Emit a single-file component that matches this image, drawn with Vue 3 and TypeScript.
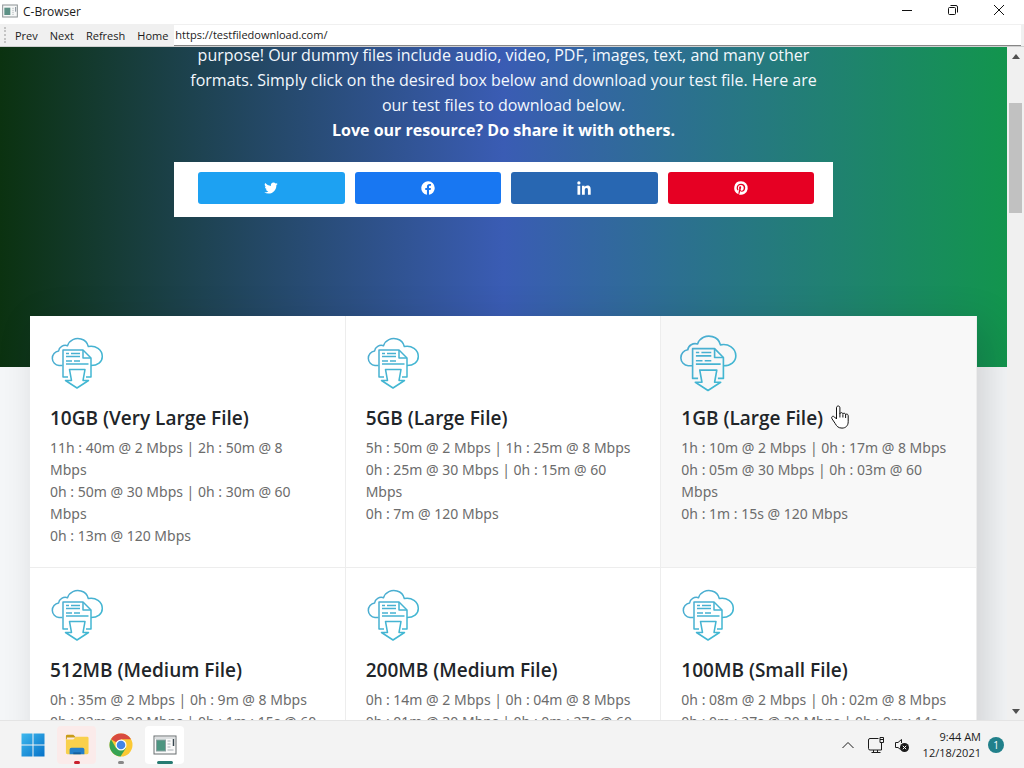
<script setup lang="ts">
import { ref } from 'vue'

interface FileCard {
  title: string
  lines: string[]
  active?: boolean
}

const address = ref('https://testfiledownload.com/')
const actions = ['Prev', 'Next', 'Refresh', 'Home']

const networks = [
  { name: 'Twitter', key: 'twitter', path: 'M28 8.6a9.9 9.9 0 0 1-2.8.8 4.9 4.9 0 0 0 2.1-2.7c-.9.5-2 1-3.1 1.2a4.9 4.9 0 0 0-8.4 4.5A14 14 0 0 1 5.7 7.2a4.9 4.9 0 0 0 1.5 6.6c-.8 0-1.6-.2-2.2-.6v.1a4.9 4.9 0 0 0 3.9 4.8c-.7.2-1.5.2-2.2.1a4.9 4.9 0 0 0 4.6 3.4A9.9 9.9 0 0 1 4 23.600a14 14 0 0 0 7.5 2.2c9.1 0 14-7.5 14-14v-.6A10 10 0 0 0 28 8.6z' },
  { name: 'Facebook', key: 'facebook', path: 'M28 16A12 12 0 1 0 14.1 27.9v-8.4h-3V16h3v-2.6c0-3 1.8-4.7 4.5-4.7 1.3 0 2.7.2 2.7.2v3h-1.5c-1.5 0-2 .9-2 1.9V16h3.4l-.5 3.5h-2.9v8.4A12 12 0 0 0 28 16z' },
  { name: 'LinkedIn', key: 'linkedin', path: 'M4.4 12h4.9v16H4.4zM6.9 4a2.9 2.9 0 1 1 0 5.8 2.9 2.9 0 0 1 0-5.8zM12.4 12h4.7v2.2h.1c.7-1.3 2.3-2.6 4.7-2.6 5 0 6 3.3 6 7.6V28H23v-7.8c0-1.9 0-4.3-2.6-4.3s-3 2-3 4.1v8h-5z' },
  { name: 'Pinterest', key: 'pinterest', path: 'M16 4a12 12 0 0 0-4.4 23.2c-.1-.9-.2-2.4 0-3.4l1.4-6s-.4-.7-.4-1.8c0-1.7 1-2.9 2.2-2.9 1 0 1.5.8 1.5 1.7 0 1-.7 2.6-1 4-.3 1.2.6 2.2 1.8 2.2 2.1 0 3.8-2.2 3.8-5.5 0-2.9-2.1-4.9-5-4.9a5.2 5.2 0 0 0-5.4 5.2c0 1 .4 2.1.9 2.7v.3l-.3 1.4c-.1.2-.2.3-.4.2-1.5-.7-2.4-2.9-2.4-4.6 0-3.8 2.7-7.3 7.9-7.3 4.1 0 7.3 3 7.3 6.9 0 4.1-2.6 7.4-6.2 7.4-1.2 0-2.3-.6-2.7-1.4l-.8 2.9c-.3 1-1 2.3-1.5 3.1A12 12 0 1 0 16 4z' },
]

const files: FileCard[] = [
  {
    title: '10GB (Very Large File)',
    lines: ['11h : 40m @ 2 Mbps | 2h : 50m @ 8', 'Mbps', '0h : 50m @ 30 Mbps | 0h : 30m @ 60', 'Mbps', '0h : 13m @ 120 Mbps'],
  },
  {
    title: '5GB (Large File)',
    lines: ['5h : 50m @ 2 Mbps | 1h : 25m @ 8 Mbps', '0h : 25m @ 30 Mbps | 0h : 15m @ 60', 'Mbps', '0h : 7m @ 120 Mbps'],
  },
  {
    title: '1GB (Large File)',
    lines: ['1h : 10m @ 2 Mbps | 0h : 17m @ 8 Mbps', '0h : 05m @ 30 Mbps | 0h : 03m @ 60', 'Mbps', '0h : 1m : 15s @ 120 Mbps'],
    active: true,
  },
  {
    title: '512MB (Medium File)',
    lines: ['0h : 35m @ 2 Mbps | 0h : 9m @ 8 Mbps', '0h : 02m @ 30 Mbps | 0h : 1m : 15s @ 60'],
  },
  {
    title: '200MB (Medium File)',
    lines: ['0h : 14m @ 2 Mbps | 0h : 04m @ 8 Mbps', '0h : 01m @ 30 Mbps | 0h : 0m : 27s @ 60'],
  },
  {
    title: '100MB (Small File)',
    lines: ['0h : 08m @ 2 Mbps | 0h : 02m @ 8 Mbps', '0h : 0m : 27s @ 30 Mbps | 0h : 0m : 14s'],
  },
]
</script>

<template>
  <div class="desktop">
    <header class="titlebar">
      <svg class="app-icon" viewBox="0 0 24 20" aria-hidden="true">
        <rect x="1" y="1" width="22" height="18" fill="#f7f8f8" stroke="#8b9294" stroke-width="1.5" />
        <rect x="3.5" y="5" width="9" height="11" fill="#5d9186" />
        <path d="M15 6h3M15 9h3M15 12h3M15 15h3" stroke="#b3bbbd" />
        <path d="M20.5 4v7" stroke="#7f8b96" stroke-width="1.5" />
      </svg>
      <span class="app-name">C-Browser</span>
      <div class="window-buttons">
        <button type="button" aria-label="Minimize"><svg viewBox="0 0 12 12"><path d="M1 6.5h10" /></svg></button>
        <button type="button" aria-label="Restore"><svg viewBox="0 0 12 12"><rect x="1.5" y="3.5" width="7" height="7" rx="1" /><path d="M3.5 1.5H9a1.5 1.5 0 0 1 1.5 1.5v5.5" /></svg></button>
        <button type="button" aria-label="Close"><svg viewBox="0 0 12 12"><path d="M1 1l10 10M11 1L1 11" /></svg></button>
      </div>
    </header>

    <nav class="toolbar">
      <span class="grip"></span>
      <button v-for="a in actions" :key="a" type="button" class="tool">{{ a }}</button>
      <input v-model="address" class="address" type="text" aria-label="Address" />
    </nav>

    <div class="viewport">
      <main class="page">
        <section class="hero">
          <p class="intro">
            purpose! Our dummy files include audio, video, PDF, images, text, and many other<br />
            formats. Simply click on the desired box below and download your test file. Here are<br />
            our test files to download below.<br />
            <strong>Love our resource? Do share it with others.</strong>
          </p>
          <div class="share">
            <a v-for="n in networks" :key="n.key" href="#" class="share-link" :class="n.key" :aria-label="n.name">
              <svg viewBox="0 0 32 32"><path :d="n.path" /></svg>
            </a>
          </div>
        </section>

        <section class="files">
          <a v-for="f in files" :key="f.title" href="#" class="file" :class="{ active: f.active }">
            <svg class="cloud" viewBox="0 0 54 54" aria-hidden="true">
              <defs>
                <linearGradient id="cloudStroke" x1="0" y1="0" x2="54" y2="54" gradientUnits="userSpaceOnUse">
                  <stop offset="0" stop-color="#4fa9d0" />
                  <stop offset="1" stop-color="#3dbcd3" />
                </linearGradient>
              </defs>
              <g fill="none" stroke="url(#cloudStroke)" stroke-width="1.5" stroke-linejoin="round">
                <path d="M12.500 29.500H9A7.300 7.300 0 0 1 8.600 15C9 10.800 13.500 8.500 17.500 9.700C19.500 4 25.500 1.500 31 3C35 4 37.500 7 38.300 10.500C45.500 9 52.300 13.500 52.300 20.500C52.300 26 47.500 29.500 41 29.500" />
                <path d="M18 41H13V14H33L41 22V41H36" />
                <path d="M33 14V22H41" />
                <path d="M16 17.500h3M21 17.500h9M16 20.500h14M16 25h6M24 25h6M16 28h22.500" />
                <path d="M19.500 33.500h15.500l-2 11h5.500L27 52L15.500 44.500h6z" />
              </g>
            </svg>
            <h2 class="file-title">
              <span class="title-text">{{ f.title }}
                <svg v-if="f.active" class="pointer" viewBox="0 0 18 24" aria-hidden="true">
                  <path d="M5.500 14V2.800c0-2.400 3.400-2.400 3.400 0V9c.2-2 3-1.800 3 .2.300-1.500 2.700-1.300 2.700.6.400-1.200 2.600-.9 2.600.9v6c0 4-2.500 6.400-6.200 6.400-3.500 0-5.300-1.700-6.800-4.600L1 13.800c-1.200-2.200 1.200-3.300 2.500-1.800z" fill="#fff" stroke="#111" />
                  <path d="M8.900 9v3.500M11.900 9.500v3M14.600 10v3" fill="none" stroke="#111" />
                </svg>
              </span>
            </h2>
            <p class="speeds">
              <template v-for="(l, i) in f.lines" :key="i">{{ l }}<br /></template>
            </p>
          </a>
        </section>
      </main>

      <div class="scrollbar" aria-hidden="true">
        <svg viewBox="0 0 8 5"><path d="M0 5L4 0l4 5z" /></svg>
        <div class="track"><div class="thumb"></div></div>
        <svg viewBox="0 0 8 5"><path d="M0 0l4 5 4-5z" /></svg>
      </div>
    </div>

    <footer class="taskbar">
      <button type="button" class="task" aria-label="Start">
        <svg viewBox="0 0 24 24">
          <defs><linearGradient id="win" x1="0" y1="0" x2="1" y2="1"><stop offset="0" stop-color="#3fb9ee" /><stop offset="1" stop-color="#0672c8" /></linearGradient></defs>
          <path fill="url(#win)" d="M.5.5h11v11H.5zM12.500.5h11v11h-11zM.5 12.500h11v11H.5zM12.500 12.500h11v11h-11z" />
        </svg>
      </button>
      <button type="button" class="task alert" aria-label="File Explorer">
        <svg viewBox="0 0 26 24">
          <path d="M1 2.500Q1 1 2.500 1H9l3 3H2v2H1z" fill="#c99b17" />
          <path d="M1 6h8l3-3h12q1.500 0 1.500 1.500v16q0 1.500-1.500 1.500H2.500Q1 22 1 20.500z" fill="#f9d04c" />
          <path d="M5 22v-5q0-2 2-2h12q2 0 2 2v5z" fill="#257fc9" />
          <path d="M9 22v-2h8v2z" fill="#155e9e" />
        </svg>
      </button>
      <button type="button" class="task running" aria-label="Chrome">
        <svg viewBox="0 0 24 24">
          <circle cx="12" cy="12" r="11.5" fill="#fbc934" />
          <path d="M12 12L2 6.300A11.500 11.500 0 0 1 22 6.300H12z" fill="#d84a3f" />
          <path d="M2 6.300A11.500 11.500 0 0 0 11.500 23.500L17 15 12 12 7 15z" fill="#36a354" />
          <circle cx="12" cy="12" r="5.5" fill="#fff" />
          <circle cx="12" cy="12" r="4.3" fill="#4285e8" />
        </svg>
      </button>
      <button type="button" class="task current" aria-label="C-Browser">
        <svg viewBox="0 0 24 24">
          <rect x="1" y="3" width="22" height="18" fill="#fafafa" stroke="#686e70" />
          <path d="M1.500 5h21" stroke="#c0c5c8" />
          <rect x="3.5" y="7" width="9" height="11" fill="#4c9580" stroke="#8aa0a0" />
          <path d="M14.500 8h3M14.500 11h3M14.500 14h3M14.500 17h6" stroke="#a8b0b5" />
          <path d="M20.500 6v7" stroke="#37464f" stroke-width="1.5" />
        </svg>
      </button>

      <div class="tray">
        <button type="button" class="tray-button" aria-label="Show hidden icons">
          <svg class="chevron" viewBox="0 0 12 8"><path d="M.5 7L6 1.500 11.500 7" /></svg>
        </button>
        <button type="button" class="tray-button" aria-label="Network">
          <svg viewBox="0 0 18 18"><path d="M11.500 2.500H3Q1.500 2.500 1.500 4v8.500Q1.500 14 3 14h11.500V7M6.500 14v2.500M10.500 14v2.500M4.500 16.500h9M13 1.500h3.500v5H13zM13 3.500h3.500" /></svg>
        </button>
        <button type="button" class="tray-button" aria-label="Volume muted">
          <svg viewBox="0 0 18 18">
            <path d="M7.500 13.500L5 11.500H2.500v-5H5L8.500 3.500V7" />
            <circle cx="11.5" cy="11.5" r="4.5" fill="#1b1b1b" stroke="none" />
            <path d="M9.800 9.800l3.400 3.400M13.200 9.800l-3.400 3.400" stroke="#fff" />
          </svg>
        </button>
        <div class="clock"><span>9:44 AM</span><span>12/18/2021</span></div>
        <button type="button" class="badge">1</button>
      </div>
    </footer>
  </div>
</template>

<style>
body {
  margin: 0;
}
</style>

<style scoped>
* {
  box-sizing: border-box;
}
.desktop {
  display: flex;
  flex-direction: column;
  height: 100vh;
  overflow: hidden;
  font-family: "Open Sans", "Noto Sans", sans-serif;
  color: #1b1b1b;
}
button {
  border: 0;
  background: none;
  padding: 0;
  font: inherit;
  color: inherit;
}
svg {
  display: block;
  flex: none;
}
.titlebar {
  flex: none;
  display: flex;
  align-items: center;
  height: 24px;
  padding: 0 0 2px 2px;
  background: #fff;
  font-size: 12px;
}
.app-icon {
  width: 16px;
  height: 14px;
  margin-right: 5px;
}
.window-buttons {
  display: flex;
  margin-left: auto;
  height: 100%;
}
.window-buttons button {
  display: flex;
  align-items: center;
  justify-content: center;
  width: 46px;
  padding-right: 4px;
  padding-bottom: 2px;
}
.window-buttons svg {
  width: 12px;
  height: 12px;
  fill: none;
  stroke: #111;
}
.toolbar {
  flex: none;
  display: flex;
  align-items: center;
  height: 23px;
  background: #f0f0f0;
  border-bottom: 1px solid #d0d0d0;
  font-size: 11px;
  padding-right: 3px;
}
.grip {
  height: 16px;
  margin: 0 3px 0 4px;
  border-left: 2px dotted #c4c4c4;
}
.tool {
  padding: 0 6px;
}
.address {
  flex: 1;
  height: 21px;
  padding: 0 1px;
  border: 0;
  border-bottom: 1px solid #868686;
  outline: 0;
  background: #fff;
  font: inherit;
  color: #1b1b1b;
}
.viewport {
  flex: 1;
  min-height: 0;
  display: flex;
}
.page {
  flex: 1;
  min-width: 0;
  overflow: hidden;
  background: #f5f7f9;
}
.hero {
  height: 320px;
  overflow: hidden;
  background: linear-gradient(90deg, #0b3210 0%, #3a5cb4 50%, #12954d 100%);
  color: #f3f8fd;
}
.intro {
  margin: -4px 0 19px;
  font-size: 16px;
  line-height: 25px;
  text-align: center;
  white-space: nowrap;
}
.intro strong {
  color: #fff;
}
.share {
  display: flex;
  gap: 10px;
  width: 66%;
  max-width: 659px;
  margin: 0 auto;
  padding: 10px 19px 13px 24px;
  background: #fff;
}
.share-link {
  flex: 1;
  display: flex;
  align-items: center;
  justify-content: center;
  height: 32px;
  border-radius: 3px;
}
.share-link svg {
  width: 18px;
  height: 18px;
  fill: #fff;
}
.twitter {
  background: #1da1f2;
}
.facebook {
  background: #1877f2;
}
.linkedin {
  background: #2867b2;
}
.pinterest {
  background: #e60023;
}
.files {
  position: relative;
  display: grid;
  grid-template-columns: repeat(3, 1fr);
  margin: -51px 30px 0;
  background: #fff;
  box-shadow: 10px 10px 40px rgba(0, 0, 0, 0.16);
}
.file {
  padding: 20px 0 20px 20px;
  border-right: 1px solid #ededed;
  border-bottom: 1px solid #ededed;
  color: inherit;
  text-decoration: none;
  white-space: nowrap;
}
.file.active {
  background: #f8f8f8;
}
.cloud {
  width: 54px;
  height: 54px;
}
.active .cloud {
  transform: scale(1.1);
}
.file-title {
  margin: 16px 0 7px;
  font-size: 19px;
  line-height: 24px;
  font-weight: 600;
  color: #212529;
}
.title-text {
  position: relative;
}
.pointer {
  position: absolute;
  left: calc(100% + 8px);
  top: 0;
  width: 18px;
  height: 24px;
}
.speeds {
  margin: 0;
  font-family: "Noto Sans", "Open Sans", sans-serif;
  font-size: 14px;
  line-height: 22px;
  color: #6c6c6c;
}
.scrollbar {
  flex: none;
  display: flex;
  flex-direction: column;
  align-items: center;
  width: 17px;
  padding: 7px 0 6px;
  background: #f0f0f0;
}
.scrollbar svg {
  width: 8px;
  height: 5px;
  fill: #505050;
}
.track {
  flex: 1;
  padding-top: 44px;
}
.thumb {
  width: 13px;
  height: 110px;
  background: #c1c1c1;
}
.taskbar {
  flex: none;
  display: flex;
  align-items: center;
  height: 48px;
  padding: 0 20px 0 13px;
  gap: 5px;
  background: #f3f3f3;
  border-top: 1px solid #e4e4e4;
}
.task {
  position: relative;
  display: flex;
  align-items: center;
  justify-content: center;
  width: 39px;
  height: 38px;
  border-radius: 4px;
}
.task svg {
  width: 24px;
  height: 24px;
}
.task.alert {
  background: #fbebea;
}
.task.current {
  background: #fff;
}
.task.alert::after,
.task.running::after,
.task.current::after {
  content: "";
  position: absolute;
  bottom: 0;
  width: 6px;
  height: 3px;
  border-radius: 2px;
  background: #888;
}
.task.alert::after {
  background: #c81f2d;
}
.task.current::after {
  width: 16px;
  background: #267b72;
}
.tray {
  display: flex;
  align-items: center;
  margin-left: auto;
}
.tray-button {
  padding: 0 4px;
}
.tray-button svg {
  width: 18px;
  height: 18px;
  fill: none;
  stroke: #1b1b1b;
}
.tray-button .chevron {
  width: 12px;
  height: 8px;
  margin-right: 5px;
}
.clock {
  display: flex;
  flex-direction: column;
  align-items: flex-end;
  margin: 0 7px 0 8px;
  font-size: 11px;
  line-height: 16px;
}
.badge {
  width: 16px;
  height: 16px;
  border-radius: 50%;
  background: #21808a;
  color: #fff;
  font-size: 10px;
  line-height: 16px;
}
</style>
